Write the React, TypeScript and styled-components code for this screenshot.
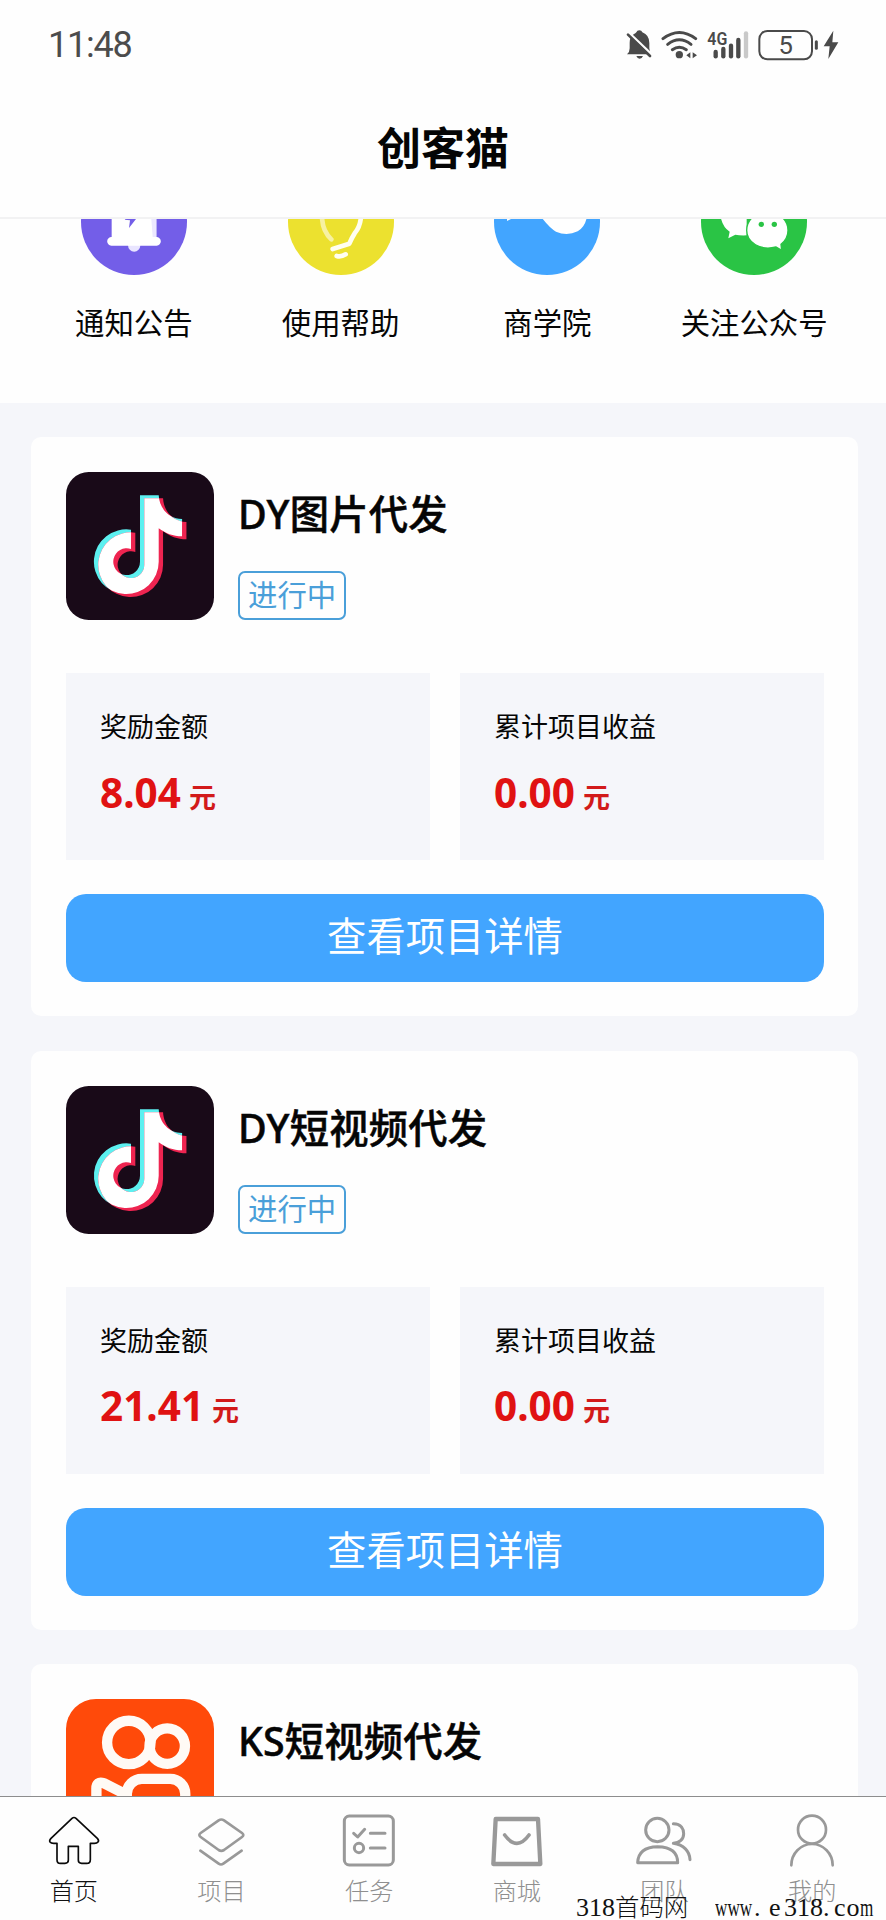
import React from "react";
import styled, { createGlobalStyle } from "styled-components";

const GlobalStyle = createGlobalStyle`
  * { box-sizing: border-box; }
  body {
    margin: 0;
    background: #f5f6fa;
    font-family: "Noto Sans CJK SC", "Noto Sans", sans-serif;
    color: #060606;
  }
`;

const Screen = styled.div`
  width: 886px;
  height: 1920px;
  display: flex;
  flex-direction: column;
  overflow: hidden;
  position: relative;
  background: #f5f6fa;
`;

const Header = styled.header`
  flex: none;
  height: 219px;
  background: #fefefe;
  border-bottom: 2px solid #f2f2f3;
`;

const StatusBar = styled.div`
  height: 90px;
  padding: 0 47px 0 48px;
  display: flex;
  align-items: center;
  justify-content: space-between;
`;

const Clock = styled.span`
  font-family: Roboto, sans-serif;
  font-size: 36px;
  line-height: 40px;
  letter-spacing: -1.2px;
  color: #4c4c4c;
`;

const StatusIcons = styled.div`
  display: flex;
  align-items: center;
  height: 34px;
  svg { display: block; }
`;

const StatusGlyph = styled.svg<{ $gap?: number }>`
  height: 34px;
  margin-left: ${(p) => p.$gap ?? 0}px;
`;

const PageTitle = styled.h1`
  margin: 0;
  height: 120px;
  line-height: 113px;
  text-align: center;
  font-size: 44px;
  font-weight: 700;
  color: #050505;
`;

const Content = styled.main`
  flex: 1;
  min-height: 0;
  overflow: hidden;
`;

const Shortcuts = styled.nav`
  display: grid;
  grid-template-columns: repeat(4, 1fr);
  height: 184px;
  padding: 0 28.5px 0 30.5px;
  background: #fefefe;
`;

const Shortcut = styled.div`
  display: flex;
  flex-direction: column;
  align-items: center;
  svg { display: block; margin-top: -50px; flex: none; }
`;

const ShortcutLabel = styled.span`
  margin-top: 24.5px;
  font-size: 29.4px;
  line-height: 42px;
  white-space: nowrap;
`;

const CardList = styled.div`
  display: flex;
  flex-direction: column;
  gap: 34.5px;
  padding: 34px 28px 0 31px;
`;

const Card = styled.section`
  flex: none;
  height: 579px;
  padding: 35px 34px 0 35px;
  border-radius: 10px;
  background: #fefefe;
`;

const CardHead = styled.div`
  display: flex;
  gap: 24px;
  height: 148px;
  svg { display: block; flex: none; }
`;

const HeadText = styled.div`
  display: flex;
  flex-direction: column;
  align-items: flex-start;
  justify-content: space-between;
  padding-top: 13px;
`;

const CardTitle = styled.h2`
  margin: 0;
  font-family: "Noto Sans", "Noto Sans CJK SC", sans-serif;
  font-size: 39.3px;
  line-height: 58px;
  letter-spacing: 0.2px;
  font-weight: 500;
  color: #050505;
  -webkit-text-stroke: 0.5px #050505;
`;

const Tag = styled.span`
  height: 49px;
  padding: 0 8px;
  border: 2px solid #4a9fd9;
  border-radius: 7px;
  font-size: 29.4px;
  line-height: 41px;
  color: #4a9fd9;
`;

const Stats = styled.div`
  display: grid;
  grid-template-columns: 1fr 1fr;
  gap: 30px;
  margin-top: 53px;
`;

const Stat = styled.div`
  height: 187px;
  padding: 33px 34px 0;
  background: #f5f6fa;
`;

const StatLabel = styled.div`
  font-size: 27px;
  line-height: 40px;
`;

const StatValue = styled.div`
  display: flex;
  align-items: baseline;
  margin-top: 18.5px;
  line-height: 56px;
  font-weight: 700;
  color: #e01212;
`;

const Amount = styled.span`
  font-family: "Noto Sans", sans-serif;
  font-size: 40.5px;
`;

const Unit = styled.span`
  margin-left: 8px;
  font-size: 27px;
  color: #d21a1a;
`;

const DetailButton = styled.button`
  display: block;
  width: 100%;
  height: 88px;
  margin-top: 34px;
  padding: 0 0 8px;
  border: 0;
  border-radius: 20px;
  background: #42a5ff;
  color: #fff;
  font-family: inherit;
  font-size: 39.3px;
  line-height: 80px;
`;

const TabBar = styled.nav`
  flex: none;
  height: 124px;
  display: grid;
  grid-template-columns: repeat(6, 1fr);
  border-top: 1px solid #8d8d8d;
  background: #fefefe;
`;

const Tab = styled.div<{ $active?: boolean }>`
  display: flex;
  flex-direction: column;
  align-items: center;
  padding-top: 15px;
  color: ${(p) => (p.$active ? "#111" : "#8f8f8f")};
  svg { display: block; flex: none; }
`;

const TabLabel = styled.span`
  font-size: 24.2px;
  line-height: 36px;
  font-weight: 300;
`;

const Watermark = styled.div`
  position: absolute;
  right: 12px;
  bottom: 0;
  display: flex;
  align-items: baseline;
  font-family: "Liberation Serif", "Noto Sans CJK SC", serif;
  font-size: 26px;
  line-height: 24px;
  font-weight: 300;
  color: #111;
  white-space: pre;
`;

const Run = styled.span<{ $width: number; $squeeze?: number; $size?: number; $spacing?: number }>`
  display: inline-block;
  width: ${(p) => p.$width}px;
  transform: scaleX(${(p) => p.$squeeze ?? 1});
  transform-origin: left;
  font-size: ${(p) => p.$size ?? 26}px;
  letter-spacing: ${(p) => p.$spacing ?? 0}px;
`;

const StatusArea = () => (
  <StatusIcons>
    <StatusGlyph width="26" viewBox="79 51 78 102">
      <path
        d="M82 130 Q90 124 90 112 V95 Q90 78 102 70 Q108 67 110 64 Q112 58 119 58 Q126 58 128 64 Q149 72 149 96 V112 Q149 124 157 130 Z"
        fill="#4a4a4a"
      />
      <path d="M110 135 H130 Q127 143 120 143 Q113 143 110 135Z" fill="#4a4a4a" />
      <path d="M88 66 L160 134" stroke="#fefefe" strokeWidth="8" />
      <path d="M85 71 L151 135" stroke="#4a4a4a" strokeWidth="8" strokeLinecap="round" />
    </StatusGlyph>
    <StatusGlyph $gap={9} width="37" viewBox="183 51 111 102">
      <g fill="none" stroke="#4a4a4a" strokeWidth="9" strokeLinecap="round">
        <path d="M189 83 Q238 46 287 83" />
        <path d="M203 100 Q238 73 273 100" />
        <path d="M217 116 Q238 101 259 116" />
      </g>
      <circle cx="238" cy="131" r="11" fill="#4a4a4a" />
      <path d="M271 124 V142 L259 133Z M278 124 V142 L291 133Z" fill="#4a4a4a" />
    </StatusGlyph>
    <StatusGlyph $gap={9} width="42" viewBox="321 51 126 102">
      <text x="322" y="101" fontFamily="Roboto, sans-serif" fontWeight="600" fontSize="55" textLength="60" lengthAdjust="spacingAndGlyphs" fill="#4a4a4a">
        4G
      </text>
      <g strokeWidth="13" strokeLinecap="round" stroke="#4a4a4a">
        <path d="M347 123 V136" />
        <path d="M370 114 V136" />
        <path d="M393 104 V136" />
        <path d="M415 87 V136" />
        <path d="M438 67 V136" stroke="#c9c9c9" />
      </g>
    </StatusGlyph>
    <StatusGlyph $gap={9} width="61" viewBox="473 51 183 102">
      <rect x="477" y="60" width="158" height="85" rx="24" fill="none" stroke="#4a4a4a" strokeWidth="6" />
      <path d="M648 92 V112" stroke="#4a4a4a" strokeWidth="9" strokeLinecap="round" />
      <text x="556" y="129" textAnchor="middle" fontFamily="Roboto, sans-serif" fontSize="77" fill="#4a4a4a">
        5
      </text>
    </StatusGlyph>
    <StatusGlyph $gap={4} width="16" viewBox="669 51 48 102">
      <path d="M700 59 L671 106 H689 L685 144 L715 94 H697Z" fill="#4a4a4a" />
    </StatusGlyph>
  </StatusIcons>
);

const NoticeIcon = () => (
  <svg width="106" height="106" viewBox="243 -93 318 318">
    <circle cx="402" cy="66" r="159" fill="#735ee8" />
    <path d="M384 135 A18 20 0 0 0 421 135Z" fill="#e9e5ff" />
    <path d="M335 111 V30 A67 67 0 0 1 469 30 V111 A13 13 0 0 1 470 137 H334 A13 13 0 0 1 335 111Z" fill="#fff" />
    <path d="M452 30 H469 V111 H458Z" fill="#ece8ff" />
    <path d="M410 30 L374 59 L390 61 L387 84 L408 57Z" fill="#735ee8" />
  </svg>
);

const HelpIcon = () => (
  <svg width="106" height="106" viewBox="863 -93 318 318">
    <circle cx="1022" cy="66" r="159" fill="#ece12f" />
    <g fill="none" strokeLinecap="round" strokeLinejoin="round" strokeWidth="14">
      <path d="M965 40 Q963 90 993 118" stroke="#f7f1a2" />
      <path d="M1082 40 Q1083 76 1063 100 Q1055 112 1047 131 L997 147" stroke="#fffef0" />
      <path d="M1009 168 Q1022 172 1036 163" stroke="#fffef0" />
    </g>
  </svg>
);

const SchoolIcon = () => (
  <svg width="106" height="106" viewBox="156 -93 318 318">
    <circle cx="315" cy="66" r="159" fill="#42a5ff" />
    <path d="M195 63 L213 54 H300 Q323 84 342 95 Q375 109 407 94 Q428 82 434 54 V20 H195Z" fill="#fff" />
  </svg>
);

const WechatIcon = () => (
  <svg width="106" height="106" viewBox="775 -93 318 318">
    <circle cx="934" cy="66" r="159" fill="#2ac445" />
    <path d="M832 40 Q837 80 861 95 L857 115 L878 104 Q892 107 912 106 V30Z" fill="#fff" />
    <path d="M974 36 C1010 36 1036 60 1036 91 C1036 110 1028 123 1015 133 L1017 151 L1000 141 C953 153 912 128 912 91 C912 60 938 36 974 36Z" fill="#fff" stroke="#2ac445" strokeWidth="4" />
    <circle cx="956" cy="73" r="8" fill="#2ac445" />
    <circle cx="995" cy="73" r="8" fill="#2ac445" />
  </svg>
);

const NOTE =
  "M365 229 H421 C423 269 452 300 491 300 V352 C464 352 441 343 421 328 V428 A97 97 0 1 1 338 332 V390 A40 40 0 1 0 365 428Z";

const DouyinLogo = ({ id }: { id: string }) => (
  <svg width="148" height="148" viewBox="137 155 443 443">
    <clipPath id={id}>
      <path d={NOTE} transform="translate(-6.5 -4.5)" />
    </clipPath>
    <rect x="137" y="155" width="443" height="443" rx="68" fill="#190a18" />
    <path d={NOTE} transform="translate(-6.5 -4.5)" fill="#5df0f0" />
    <path d={NOTE} transform="translate(6.5 4.5)" fill="#ee2450" />
    <g clipPath={`url(#${id})`}>
      <path d={NOTE} transform="translate(6.5 4.5)" fill="#fff" />
    </g>
  </svg>
);

const KuaishouLogo = () => (
  <svg width="148" height="148" viewBox="137 117 443 443">
    <rect x="137" y="117" width="443" height="443" rx="90" fill="#ff4a0a" />
    <g fill="none" stroke="#fffaf5" strokeWidth="31" strokeLinejoin="round">
      <circle cx="325" cy="247" r="65" />
      <circle cx="440" cy="258" r="53" />
      <rect x="319" y="356" width="175" height="150" rx="45" />
      <path d="M319 404 L250 369 Q228 362 228 385 V477 Q228 500 250 493 L319 458" />
    </g>
  </svg>
);

const HomeIcon = () => (
  <svg width="60" height="60" viewBox="131 95 180 180">
    <path
      d="M215 114 Q221 109 227 114 L291 174 Q297 180 293 185 Q290 189 282 189 H270 V238 Q270 249 259 249 H244 Q234 249 234 240 V198 H204 V240 Q204 249 194 249 H180 Q170 249 170 238 V189 H160 Q152 189 149 185 Q146 180 152 174Z"
      fill="none"
      stroke="#0a0a0a"
      strokeWidth="5"
      strokeLinejoin="round"
    />
  </svg>
);

const LayersIcon = () => (
  <svg width="60" height="60" viewBox="575 95 180 180">
    <g fill="none" stroke="#999" strokeWidth="8" strokeLinecap="round" strokeLinejoin="round">
      <path d="M658 120 Q666 115 674 120 L728 158 Q736 164 728 170 L674 209 Q666 214 658 209 L604 170 Q596 164 604 158Z" />
      <path d="M603 211 L658 250 Q665 255 672 250 L727 211" />
    </g>
  </svg>
);

const TasksIcon = () => (
  <svg width="60" height="60" viewBox="1018 95 180 180">
    <g fill="none" stroke="#999" strokeWidth="9" strokeLinecap="round" strokeLinejoin="round">
      <rect x="1034" y="107" width="147" height="147" rx="15" />
      <path d="M1062 159 L1074 170 L1095 147" />
      <path d="M1112 159 H1156 M1112 203 H1156" />
      <circle cx="1078" cy="203" r="14" />
    </g>
  </svg>
);

const ShopIcon = () => (
  <svg width="60" height="60" viewBox="132 95 180 180">
    <g fill="none" stroke="#999" strokeWidth="13" strokeLinecap="round" strokeLinejoin="round">
      <path d="M158 116 H285 L292 251 H151Z" />
      <path d="M185 164 Q222 214 258 164" strokeWidth="11" />
    </g>
  </svg>
);

const TeamIcon = () => (
  <svg width="60" height="60" viewBox="575 95 180 180">
    <g fill="none" stroke="#999" strokeWidth="9" strokeLinecap="round" strokeLinejoin="round">
      <circle cx="645" cy="149" r="35" />
      <path d="M586 247 H706 Q706 200 646 199 Q588 200 586 247Z" />
      <path d="M693 130 C718 130 724 148 724 160 C724 176 712 188 693 189 C724 193 742 213 743 238" />
    </g>
  </svg>
);

const MineIcon = () => (
  <svg width="60" height="60" viewBox="1018 95 180 180">
    <g fill="none" stroke="#999" strokeWidth="8" strokeLinecap="round">
      <circle cx="1108" cy="148" r="42" />
      <path d="M1046 255 A62 64 0 0 1 1170 255" />
    </g>
  </svg>
);

const shortcuts = [
  { label: "通知公告", Icon: NoticeIcon },
  { label: "使用帮助", Icon: HelpIcon },
  { label: "商学院", Icon: SchoolIcon },
  { label: "关注公众号", Icon: WechatIcon },
];

const projects = [
  { title: "DY图片代发", reward: "8.04", total: "0.00", logo: <DouyinLogo id="note-a" /> },
  { title: "DY短视频代发", reward: "21.41", total: "0.00", logo: <DouyinLogo id="note-b" /> },
];

const tabs = [
  { label: "首页", Icon: HomeIcon },
  { label: "项目", Icon: LayersIcon },
  { label: "任务", Icon: TasksIcon },
  { label: "商城", Icon: ShopIcon },
  { label: "团队", Icon: TeamIcon },
  { label: "我的", Icon: MineIcon },
];

const StatBox = ({ label, value }: { label: string; value: string }) => (
  <Stat>
    <StatLabel>{label}</StatLabel>
    <StatValue>
      <Amount>{value}</Amount>
      <Unit>元</Unit>
    </StatValue>
  </Stat>
);

export default function App() {
  return (
    <Screen>
      <GlobalStyle />
      <Header>
        <StatusBar>
          <Clock>11:48</Clock>
          <StatusArea />
        </StatusBar>
        <PageTitle>创客猫</PageTitle>
      </Header>
      <Content>
        <Shortcuts>
          {shortcuts.map(({ label, Icon }) => (
            <Shortcut key={label}>
              <Icon />
              <ShortcutLabel>{label}</ShortcutLabel>
            </Shortcut>
          ))}
        </Shortcuts>
        <CardList>
          {projects.map((p) => (
            <Card key={p.title}>
              <CardHead>
                {p.logo}
                <HeadText>
                  <CardTitle>{p.title}</CardTitle>
                  <Tag>进行中</Tag>
                </HeadText>
              </CardHead>
              <Stats>
                <StatBox label="奖励金额" value={p.reward} />
                <StatBox label="累计项目收益" value={p.total} />
              </Stats>
              <DetailButton>查看项目详情</DetailButton>
            </Card>
          ))}
          <Card>
            <CardHead>
              <KuaishouLogo />
              <HeadText>
                <CardTitle>KS短视频代发</CardTitle>
              </HeadText>
            </CardHead>
          </Card>
        </CardList>
      </Content>
      <TabBar>
        {tabs.map(({ label, Icon }, i) => (
          <Tab key={label} $active={i === 0}>
            <Icon />
            <TabLabel>{label}</TabLabel>
          </Tab>
        ))}
      </TabBar>
      <Watermark>
        <Run $width={39}>318</Run>
        <Run $width={100} $size={24.4}>首码网</Run>
        <Run $width={39} $squeeze={0.66}>www</Run>
        <Run $width={15}>.</Run>
        <Run $width={15}>e</Run>
        <Run $width={39}>318</Run>
        <Run $width={11}>.</Run>
        <Run $width={26} $spacing={1}>co</Run>
        <Run $width={14} $squeeze={0.66}>m</Run>
      </Watermark>
    </Screen>
  );
}
